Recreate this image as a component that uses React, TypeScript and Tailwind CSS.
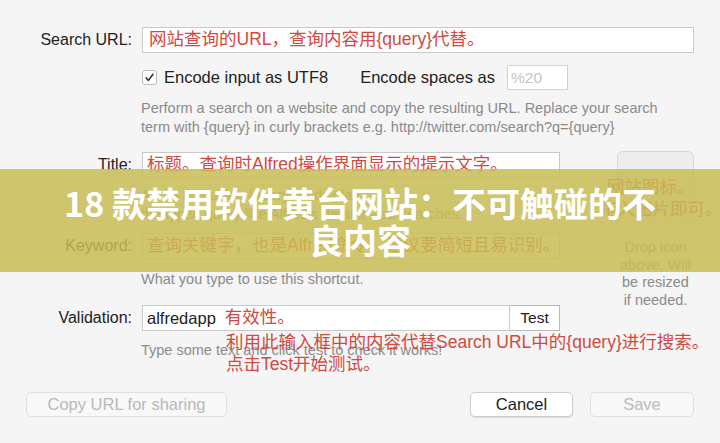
import React from "react";

const SANS = "font-['Liberation_Sans','Noto_Sans_CJK_SC',sans-serif]";
const RED = "text-[#cf4a3f]";

const Label: React.FC<{ children: React.ReactNode }> = ({ children }) => (
  <div className="w-[132px] shrink-0 text-right text-[16px] text-[#222]">{children}</div>
);

const Field: React.FC<{ className?: string; children?: React.ReactNode }> = ({ className = "", children }) => (
  <div
    className={`flex h-[26px] items-center whitespace-nowrap border border-[#c9c9c9] bg-white px-[4px] text-[17.5px] leading-none ${className}`}
  >
    {children}
  </div>
);

const Help: React.FC<{ children: React.ReactNode; className?: string }> = ({ children, className = "" }) => (
  <div className={`pl-[141px] text-[14.5px] leading-[19px] text-[#8b8b8b] ${className}`}>{children}</div>
);

export default function App() {
  return (
    <div className={`relative h-[443px] w-[720px] overflow-hidden bg-[#f5f5f5] ${SANS}`}>
      <div className="flex flex-col pt-[27px]">
        {/* Search URL */}
        <div className="flex items-center gap-[10px]">
          <Label>Search URL:</Label>
          <Field className="w-[552px]">
            <span className={`${RED} pl-[2px]`}>网站查询的URL，查询内容用{"{query}"}代替。</span>
          </Field>
        </div>

        {/* encode options */}
        <div className="mt-[12px] flex h-[25px] items-center pl-[142px] text-[16.5px] text-[#222]">
          <span className="flex h-[15px] w-[15px] items-center justify-center rounded-[3px] border border-[#bdbdbd] bg-white">
            <svg viewBox="0 0 12 12" className="h-[11px] w-[11px]">
              <path d="M2.2 6.4 L4.8 9.2 L9.8 2.4" fill="none" stroke="#2a2a2a" strokeWidth="1.6" strokeLinecap="round" strokeLinejoin="round" />
            </svg>
          </span>
          <span className="ml-[7px]">Encode input as UTF8</span>
          <span className="ml-[32px]">Encode spaces as</span>
          <div className="ml-[12px] flex h-[25px] w-[61px] items-center border border-[#d2d2d2] bg-white px-[3px] text-[15.5px] text-[#c4c4c4]">
            %20
          </div>
        </div>

        <Help className="mt-[9px]">
          <div className="whitespace-nowrap">Perform a search on a website and copy the resulting URL. Replace your search</div>
          <div className="whitespace-nowrap">term with {"{query}"} in curly brackets e.g. http://twitter.com/search?q={"{query}"}</div>
        </Help>

        {/* Title / keyword with icon well */}
        <div className="mt-[15px] flex">
          <div className="flex flex-col">
            <div className="flex items-center gap-[10px]">
              <Label>Title:</Label>
              <Field className="w-[418px]">
                <span className={RED}>标题。查询时Alfred操作界面显示的提示文字。</span>
              </Field>
            </div>
            <Help className="mt-[8px]">
              <div>Add a title using {"{query}"} to display</div>
              <div>the typed query like Alfred's default web searches.</div>
            </Help>
            <div className="mt-[9px] flex items-center gap-[10px]">
              <Label>Keyword:</Label>
              <Field className="w-[418px]">
                <span className={RED}>查询关键字，也是Alfred命令，建议要简短且易识别。</span>
              </Field>
            </div>
            <Help className="mt-[11px]">What you type to use this shortcut.</Help>
          </div>

          <div className="relative ml-[57px] mt-[-1px] flex w-[77px] flex-col items-center">
            <div className="h-[77px] w-[77px] rounded-[6px] border border-[#d6d6d6] bg-[#ededed]" />
            <div className="mt-[11px] whitespace-nowrap text-center text-[14.5px] leading-[17.5px] text-[#8b8b8b]">
              Drop icon
              <br />
              above. Will
              <br />
              be resized
              <br />
              if needed.
            </div>
            <div className={`absolute left-[-10px] top-[25px] whitespace-nowrap text-[17.5px] leading-[22px] ${RED}`}>
              网站图标。
            </div>
            <div className={`absolute left-[-17px] top-[47px] whitespace-nowrap text-[17.5px] leading-[22px] ${RED}`}>
              拖入图片即可。
            </div>
          </div>
        </div>

        {/* Validation */}
        <div className="relative mt-[-4px] flex items-center gap-[10px]">
          <Label>Validation:</Label>
          <div className="flex">
            <Field className="w-[368px]">
              <span className="text-[16.5px] text-[#222]">alfredapp</span>
              <span className={`ml-[9px] ${RED}`}>有效性。</span>
            </Field>
            <div className="flex h-[26px] w-[50px] items-center justify-center border border-l-0 border-[#b9b9b9] bg-white text-[15.5px] text-[#222]">
              Test
            </div>
          </div>
        </div>
        <div className="relative">
          <Help className="mt-[10px]">Type some text and click test to check it works!</Help>
          <div className={`absolute left-[226px] top-[0px] whitespace-nowrap text-[17.5px] leading-[22px] ${RED}`}>
            利用此输入框中的内容代替Search URL中的{"{query}"}进行搜索。
            <br />
            点击Test开始测试。
          </div>
        </div>

        {/* buttons */}
        <div className="mt-[32px] flex items-center px-[26px]">
          <div className="flex h-[25px] w-[201px] items-center justify-center rounded-[5px] border border-[#e0e0e0] bg-[#f8f8f8] text-[16.5px] text-[#b9b9b9]">
            Copy URL for sharing
          </div>
          <div className="ml-auto flex h-[25px] w-[103px] items-center justify-center rounded-[5px] border border-[#cfcfcf] bg-white text-[16.5px] text-[#222] shadow-[0_1px_1px_rgba(0,0,0,0.12)]">
            Cancel
          </div>
          <div className="ml-[17px] flex h-[25px] w-[104px] items-center justify-center rounded-[5px] border border-[#e0e0e0] bg-[#f8f8f8] text-[16.5px] text-[#bcbcbc]">
            Save
          </div>
        </div>
      </div>

      {/* overlay banner */}
      <div className="absolute left-0 right-0 top-[169px] flex h-[103px] items-center justify-center bg-[#c8bc55]/85">
        <div className="w-[616px] text-center text-[34px] font-bold leading-[37px] text-white font-['Noto_Sans_CJK_SC','Noto_Sans',sans-serif]">
          18 款禁用软件黄台网站：不可触碰的不良内容
        </div>
      </div>
    </div>
  );
}
